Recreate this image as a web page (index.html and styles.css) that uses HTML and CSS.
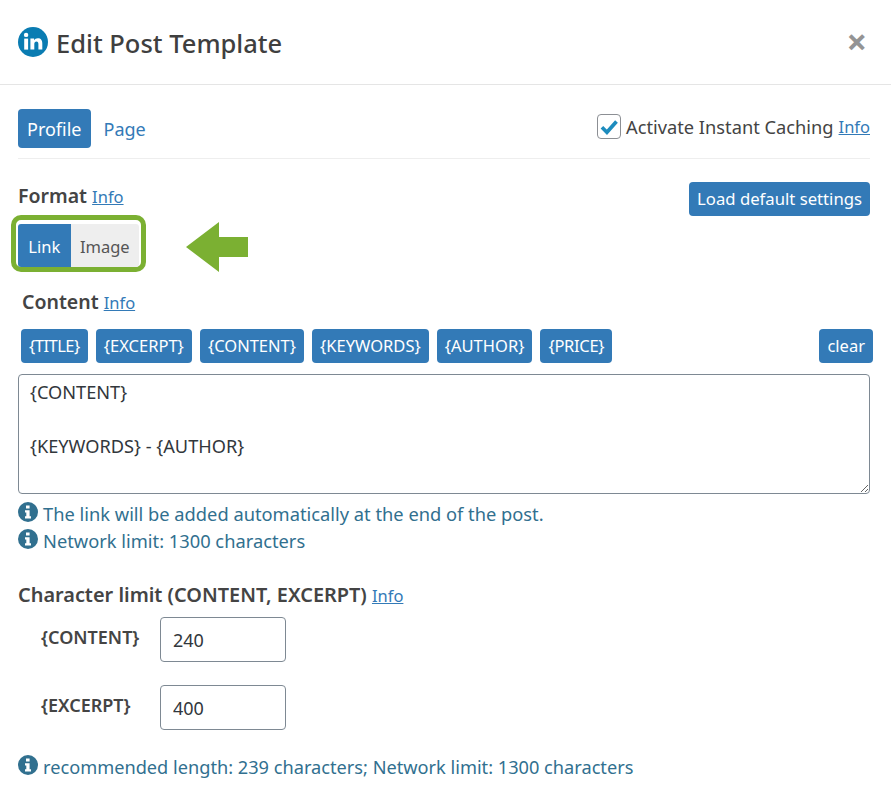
FILE: index.html
```html
<!DOCTYPE html>
<html lang="en">
<head>
    <meta charset="UTF-8">
    <title>Edit Post Template</title>
    <link rel="stylesheet" href="styles.css">
</head>
<body>
    <div class="modal">
        <!-- header -->
        <div class="modal_head">
            <svg class="logo" viewBox="0 0 30 30" width="30" height="30">
                <circle cx="15" cy="15" r="15" fill="#0a7cb2"/>
                <rect x="6.2" y="11.6" width="3.9" height="11" fill="#fff"/>
                <circle cx="8.1" cy="7.9" r="2.2" fill="#fff"/>
                <path d="M12.4 11.6h3.7v1.6c.7-1.1 2-1.9 3.7-1.9 3.2 0 4.5 2 4.5 5.2v6.1h-3.9v-5.5c0-1.6-.6-2.6-1.9-2.6-1.4 0-2.2 1-2.2 2.6v5.5h-3.9z" fill="#fff"/>
            </svg>
            <h1 class="title">Edit Post Template</h1>
            <span class="close">&times;</span>
        </div>

        <div class="modal_body">
            <!-- tabs -->
            <div class="tabs">
                <a href="javascript:;" class="tab current">Profile</a>
                <a href="javascript:;" class="tab">Page</a>
                <label class="caching">
                    <span class="check">
                        <svg viewBox="0 0 24 24" width="20" height="20"><path d="M3.5 13.5l6 6L21 6.5" fill="none" stroke="#1e8cbe" stroke-width="4.4"/></svg>
                    </span>
                    Activate Instant Caching <a href="javascript:;" class="info">Info</a>
                </label>
            </div>

            <!-- format -->
            <div class="format_row">
                <div>
                    <div class="label format_label">Format <a href="javascript:;" class="info">Info</a></div>
                    <div class="format_line">
                        <div class="outline">
                            <a href="javascript:;" class="seg current">Link</a>
                            <a href="javascript:;" class="seg">Image</a>
                        </div>
                        <svg class="arrow" viewBox="0 0 62 50" width="62" height="50"><path d="M0 25L33 0v15h29v20H33v15z" fill="#7bb032"/></svg>
                    </div>
                </div>
                <a href="javascript:;" class="btn load">Load default settings</a>
            </div>

            <!-- content -->
            <div class="label content_label">Content <a href="javascript:;" class="info">Info</a></div>
            <div class="tags">
                <a href="javascript:;" class="btn title_tag">{TITLE}</a>
                <a href="javascript:;" class="btn">{EXCERPT}</a>
                <a href="javascript:;" class="btn">{CONTENT}</a>
                <a href="javascript:;" class="btn">{KEYWORDS}</a>
                <a href="javascript:;" class="btn">{AUTHOR}</a>
                <a href="javascript:;" class="btn price_tag">{PRICE}</a>
                <a href="javascript:;" class="btn clear">clear</a>
            </div>
            <textarea class="text" spellcheck="false">{CONTENT}

{KEYWORDS} - {AUTHOR}</textarea>
            <div class="note">
                <svg class="i_icon" viewBox="0 0 20 20" width="20" height="20"><circle cx="10" cy="10" r="10" fill="#31708f"/><path d="M8 3.5h3.6v3H8zM7 8.300h4.600v6h1.400v2.200H7v-2.200h1.300v-3.800H7z" fill="#fff"/></svg>
                The link will be added automatically at the end of the post.
            </div>
            <div class="note">
                <svg class="i_icon" viewBox="0 0 20 20" width="20" height="20"><circle cx="10" cy="10" r="10" fill="#31708f"/><path d="M8 3.5h3.6v3H8zM7 8.300h4.600v6h1.400v2.200H7v-2.200h1.300v-3.800H7z" fill="#fff"/></svg>
                Network limit: 1300 characters
            </div>

            <!-- character limit -->
            <div class="label limit_label">Character limit (CONTENT, EXCERPT) <a href="javascript:;" class="info">Info</a></div>
            <div class="field">
                <span class="field_name">{CONTENT}</span>
                <input class="num" type="text" value="240">
            </div>
            <div class="field">
                <span class="field_name">{EXCERPT}</span>
                <input class="num" type="text" value="400">
            </div>
            <div class="note last">
                <svg class="i_icon" viewBox="0 0 20 20" width="20" height="20"><circle cx="10" cy="10" r="10" fill="#31708f"/><path d="M8 3.5h3.6v3H8zM7 8.300h4.600v6h1.400v2.200H7v-2.200h1.300v-3.800H7z" fill="#fff"/></svg>
                recommended length: 239 characters; Network limit: 1300 characters
            </div>
        </div>
    </div>
</body>
</html>
```

FILE: styles.css
```css
*{
    box-sizing: border-box;
}
html,body{
    margin: 0;
    padding: 0;
    background-color: #fff;
}
body{
    font-family: "Noto Sans", "Open Sans", sans-serif;
    font-size: 18px;
    color: #444;
    height: 793px;
    overflow: hidden;
}
a{
    text-decoration: none;
}
.modal_head{
    display: flex;
    align-items: center;
    height: 85px;
    padding: 0 24px 0 18px;
    border-bottom: 1px solid #e5e5e5;
}
.logo{
    margin-right: 8px;
}
.title{
    flex: 1;
    margin: 2px 0 0;
    font-size: 25.5px;
    font-weight: 500;
    color: #3f3f3f;
}
.close{
    font-size: 36px;
    font-weight: 700;
    line-height: 1;
    color: #949494;
}
.modal_body{
    padding: 24px 21px 0 18px;
}
.tabs{
    display: flex;
    align-items: center;
    height: 50px;
    padding-bottom: 10px;
    border-bottom: 1px solid #eee;
}
.tab{
    padding: 0 9px;
    height: 39px;
    line-height: 41px;
    color: #337ab7;
    border-radius: 4px;
    margin-right: 4px;
}
.tab.current{
    background-color: #337ab7;
    color: #fff;
}
.caching{
    margin-left: auto;
    margin-top: -5px;
    display: flex;
    align-items: center;
    gap: 5px;
    font-size: 18.25px;
}
.check{
    display: flex;
    align-items: center;
    justify-content: center;
    width: 24px;
    height: 25px;
    border: 1px solid #8c8f94;
    border-radius: 4px;
}
.info{
    color: #337ab7;
    text-decoration: underline;
    font-weight: 400;
    font-size: 16.5px;
}
.label{
    font-weight: 600;
    font-size: 19.5px;
    color: #444;
}
.format_row{
    display: flex;
    justify-content: space-between;
    align-items: flex-start;
    margin-top: 23px;
}
.format_label{
    line-height: 28px;
    margin-bottom: 4px;
}
.format_line{
    display: flex;
    align-items: flex-start;
    gap: 40px;
    margin-left: -7px;
}
.arrow{
    margin-top: 7px;
}
.outline{
    display: flex;
    padding: 4px 2px 1px 2px;
    border: 5px solid #7bb032;
    border-radius: 10px;
    width: 135px;
    height: 57px;
}
.seg{
    height: 43px;
    line-height: 45px;
    text-align: center;
    font-size: 16.5px;
    color: #555;
    background-color: #eee;
    width: 69px;
    border-radius: 0 3px 3px 0;
}
.seg.current{
    width: 53px;
    background-color: #337ab7;
    color: #fff;
    border-radius: 3px 0 0 3px;
}
.btn{
    display: block;
    height: 34px;
    line-height: 33px;
    padding: 0 8px;
    background-color: #337ab7;
    color: #fff;
    font-size: 16.5px;
    border-radius: 4px;
}
.title_tag{
    letter-spacing: -.5px;
}
.price_tag{
    letter-spacing: -.3px;
}
.load{
    font-size: 16.7px;
}
.content_label{
    margin: 15px 0 0 4px;
    line-height: 30px;
}
.tags{
    display: flex;
    gap: 8px;
    margin: 11px -3px 11px 3px;
}
.clear{
    margin-left: auto;
}
.text{
    display: block;
    width: 100%;
    height: 120px;
    padding: 4px 11px;
    border: 1px solid #7e8993;
    border-radius: 4px;
    font-family: inherit;
    font-size: 18.2px;
    line-height: 27px;
    color: #32373c;
}
.note{
    display: flex;
    align-items: center;
    gap: 5px;
    height: 27px;
    color: #31708f;
    font-size: 18.3px;
}
.text + .note{
    margin-top: 6px;
}
.i_icon{
    flex: none;
    margin-top: -4px;
}
.limit_label{
    margin-top: 26px;
    line-height: 30px;
    font-size: 19.9px;
}
.field{
    display: flex;
    align-items: flex-start;
    padding-left: 23px;
    margin-top: 6px;
    margin-bottom: 23px;
}
.field_name{
    width: 119px;
    font-weight: 600;
    font-size: 18px;
    line-height: 28px;
    margin-top: 6px;
}
.num{
    width: 126px;
    height: 45px;
    padding: 0 12px;
    border: 1px solid #7e8993;
    border-radius: 4px;
    font-family: inherit;
    font-size: 18px;
    color: #32373c;
}
.note.last{
    margin-top: 23px;
    font-size: 18.2px;
}
```
